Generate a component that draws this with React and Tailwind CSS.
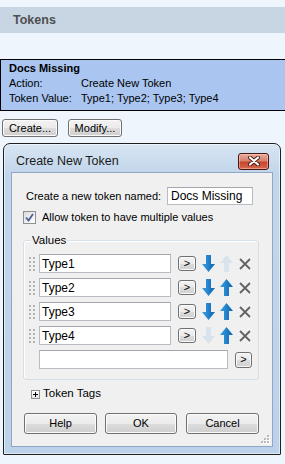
import React from 'react';

const btnBase =
  "rounded-[3px] border border-[#707070] bg-[linear-gradient(#f2f2f2_0%,#ebebeb_50%,#dddddd_50%,#cfcfcf_100%)] shadow-[inset_0_0_0_1px_#fbfbfb] text-[11px] leading-none text-black flex items-center justify-center";

const ArrowDown = ({ disabled }) => (
  <svg width="13" height="17" viewBox="0 0 13 17">
    <defs>
      <linearGradient id="blueH" x1="0" x2="1" y1="0" y2="0">
        <stop offset="0" stopColor="#3aa0e6" />
        <stop offset="1" stopColor="#0d62ad" />
      </linearGradient>
    </defs>
    <path d="M4 0H9V9H13L6.5 17L0 9H4Z" fill={disabled ? '#d9e3ec' : 'url(#blueH)'} />
  </svg>
);

const ArrowUp = ({ disabled }) => (
  <svg width="13" height="17" viewBox="0 0 13 17">
    <path d="M6.5 0L13 8H9V17H4V8H0Z" fill={disabled ? '#d9e3ec' : 'url(#blueH)'} />
  </svg>
);

const Cross = () => (
  <svg width="14" height="14" viewBox="0 0 14 14">
    <path d="M2 2L12 12M12 2L2 12" stroke="#636363" strokeWidth="1.8" />
  </svg>
);

const Grip = () => (
  <svg width="6" height="16" viewBox="0 0 6 16">
    {[1, 5, 9, 13].map((y) => (
      <g key={y} fill="#b4b4b4">
        <rect x="0" y={y} width="2" height="2" />
        <rect x="4" y={y} width="2" height="2" />
      </g>
    ))}
  </svg>
);

const TextBox = ({ value, w }) => (
  <div className={`${w} h-[19px] bg-white border border-[#b9bcc2] border-t-[#a3a6ac] flex items-center pl-[2px] text-[12px]`}>
    {value}
  </div>
);

const SmallBtn = ({ w = 'w-[18px]', h = 'h-[15px]' }) => (
  <div className={`${btnBase} ${w} ${h} text-[9px] text-[#2a3550]`}>&gt;</div>
);

const App = () => {
  const rows = [
    { v: 'Type1', down: true, up: false },
    { v: 'Type2', down: true, up: true },
    { v: 'Type3', down: true, up: true },
    { v: 'Type4', down: false, up: true },
  ];

  return (
    <div className="w-[285px] h-[464px] bg-[#eef5fd] overflow-hidden pt-[7px] font-['Liberation_Sans',Arial,sans-serif] text-[11px] text-black">
      <div className="h-[26px] bg-[#c8d6e4] flex items-center pl-[13px] text-[12.5px] font-bold text-[#4f4f4f]">
        Tokens
      </div>

      <div className="mt-[26px] w-[290px] h-[52px] border border-black bg-[#a9c5f0] pl-[8px] pt-[1px] leading-[15px]">
        <div className="font-bold">Docs Missing</div>
        <div className="flex">
          <span className="w-[72px]">Action:</span>
          <span>Create New Token</span>
        </div>
        <div className="flex">
          <span className="w-[72px]">Token Value:</span>
          <span>Type1; Type2; Type3; Type4</span>
        </div>
      </div>

      <div className="mt-[8px] pl-[2px] flex gap-[10px]">
        <div className={`${btnBase} w-[56px] h-[18px]`}>Create...</div>
        <div className={`${btnBase} w-[54px] h-[18px]`}>Modify...</div>
      </div>

      <div className="mt-[6px] ml-[3px] w-[278px] h-[312px] border border-[#1f1f1f] rounded-t-[7px] rounded-b-[1px] bg-[linear-gradient(#d8e5f3,#c2d6eb_28px,#bcd2ea)] shadow-[inset_0_0_0_1px_rgba(255,255,255,0.55)] flex flex-col">
        <div className="h-[28px] pt-[6px] pl-[12px] pr-[11px] flex items-center justify-between">
          <span className="text-[12.5px] text-[#1b1b1b]">Create New Token</span>
          <div className="w-[31px] h-[17px] rounded-[3px] border border-[#4a1610] bg-[linear-gradient(#e9a99a_0%,#d68470_45%,#c7452c_55%,#d8694e_100%)] shadow-[inset_0_0_0_1px_rgba(255,220,210,0.45)] flex items-center justify-center">
            <svg width="12" height="10" viewBox="0 0 12 10">
              <path d="M2 1.5L10 8.5M10 1.5L2 8.5" stroke="#4a1a14" strokeWidth="4" strokeLinecap="round" />
              <path d="M2 1.5L10 8.5M10 1.5L2 8.5" stroke="#ffffff" strokeWidth="2.2" strokeLinecap="round" />
            </svg>
          </div>
        </div>

        <div className="ml-[7px] w-[262px] h-[275px] border border-[#90a6c2] bg-[#f0f0f0] relative flex flex-col">
          <div className="mt-[14px] pl-[14px] h-[18px] flex items-center">
            <span className="w-[141px]">Create a new token named:</span>
            <div className="w-[86px] h-[18px] bg-white border border-[#b9bcc2] border-t-[#a3a6ac] flex items-center pl-[3px] text-[12px]">
              Docs Missing
            </div>
          </div>

          <div className="mt-[6px] pl-[11px] h-[13px] flex items-center gap-[6px]">
            <div className="w-[13px] h-[13px] border border-[#8e8f8f] bg-[linear-gradient(135deg,#dcdcdc,#ffffff)] flex items-center justify-center">
              <svg width="9" height="9" viewBox="0 0 9 9">
                <path d="M1 4.5L3.5 7.5L8 1" stroke="#4a5f97" strokeWidth="1.8" fill="none" />
              </svg>
            </div>
            <span>Allow token to have multiple values</span>
          </div>

          <div className="mt-[16px] ml-[11px] w-[236px] h-[140px] border border-[#d5dfe5] rounded-[3px] shadow-[inset_1px_1px_0_#ffffff] relative pt-[13px] pl-[5px] flex flex-col gap-[5px]">
            <span className="absolute -top-[8px] left-[7px] px-[1px] bg-[#f0f0f0] leading-[14px] text-[11.5px]">Values</span>
            {rows.map((r) => (
              <div key={r.v} className="h-[19px] flex items-center">
                <Grip />
                <div className="ml-[4px]">
                  <TextBox value={r.v} w="w-[132px]" />
                </div>
                <div className="ml-[7px]">
                  <SmallBtn />
                </div>
                <div className="ml-[6px]">
                  <ArrowDown disabled={!r.down} />
                </div>
                <div className="ml-[5px]">
                  <ArrowUp disabled={!r.up} />
                </div>
                <div className="ml-[5px]">
                  <Cross />
                </div>
              </div>
            ))}
            <div className="h-[19px] flex items-center pl-[10px]">
              <TextBox value="" w="w-[189px]" />
              <div className="ml-[7px]">
                <SmallBtn w="w-[17px]" h="h-[16px]" />
              </div>
            </div>
          </div>

          <div className="mt-[7px] ml-[19px] h-[14px] flex items-center gap-[3px]">
            <div className="w-[9px] h-[9px] border border-[#919191] bg-[linear-gradient(#ffffff,#e4e4e4)] flex items-center justify-center">
              <svg width="5" height="5" viewBox="0 0 5 5">
                <path d="M0 2.5H5M2.5 0V5" stroke="#000" strokeWidth="1" />
              </svg>
            </div>
            <span className="text-[11.5px]">Token Tags</span>
          </div>

          <div className="mt-[12px] ml-[12px] flex">
            <div className={`${btnBase} w-[73px] h-[21px]`}>Help</div>
            <div className={`${btnBase} ml-[8px] w-[72px] h-[21px] border-[#3c7fb1] shadow-[inset_0_0_0_1px_#bfe6f7]`}>OK</div>
            <div className={`${btnBase} ml-[9px] w-[73px] h-[21px]`}>Cancel</div>
          </div>

          <svg className="absolute right-[2px] bottom-[2px]" width="10" height="10" viewBox="0 0 10 10">
            {[[8, 2], [8, 5], [5, 5], [8, 8], [5, 8], [2, 8]].map(([x, y]) => (
              <g key={`${x}-${y}`}>
                <rect x={x} y={y} width="2" height="2" fill="#ffffff" />
                <rect x={x - 1} y={y - 1} width="2" height="2" fill="#b9b9b9" />
              </g>
            ))}
          </svg>
        </div>
      </div>
    </div>
  );
};

export default App;
